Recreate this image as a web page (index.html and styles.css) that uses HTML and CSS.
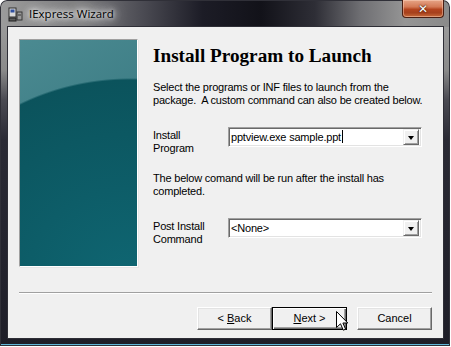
FILE: index.html
```html
<!DOCTYPE html>
<html>
<head>
<meta charset="utf-8">
<link rel="stylesheet" href="styles.css">
</head>
<body>
<div class="window">
  <div class="titlebar">
    <svg class="app-icon" width="15" height="15" viewBox="0 0 15 15">
      <rect x="1" y="1" width="7" height="9" fill="#d8d8d8" stroke="#303030"/>
      <rect x="2.5" y="2.5" width="4" height="3" fill="#3050a0"/>
      <rect x="9" y="5" width="5" height="8" fill="#9a9a9a" stroke="#303030"/>
      <rect x="1" y="11" width="7" height="3" fill="#5a5a5a" stroke="#202020"/>
      <line x1="10" y1="8" x2="13" y2="8" stroke="#303030"/>
    </svg>
    <span class="title">IExpress Wizard</span>
    <div class="close"><span class="close-x">✕</span></div>
  </div>
  <div class="client">
    <div class="main">
      <div class="banner"></div>
      <div class="content">
        <h1 class="heading">Install Program to Launch</h1>
        <p class="text">Select the programs or INF files to launch from the<br>package.&nbsp; A custom command can also be created below.</p>
        <div class="field field-first">
          <div class="label">Install<br>Program</div>
          <div class="combo">
            <span class="combo-value">pptview.exe sample.ppt<span class="caret"></span></span>
            <span class="combo-btn"><span class="arrow"></span></span>
          </div>
        </div>
        <p class="text text-second">The below comand will be run after the install has<br>completed.</p>
        <div class="field field-second">
          <div class="label">Post Install<br>Command</div>
          <div class="combo">
            <span class="combo-value">&lt;None&gt;</span>
            <span class="combo-btn"><span class="arrow"></span></span>
          </div>
        </div>
      </div>
    </div>
    <div class="separator"></div>
    <div class="buttons">
      <div class="btn"><span>&lt;&nbsp;<u>B</u>ack</span></div>
      <div class="btn btn-default"><span><u>N</u>ext&nbsp;&gt;</span></div>
      <div class="btn btn-cancel"><span>Cancel</span></div>
    </div>
  </div>
  <svg class="cursor" width="13" height="21" viewBox="0 0 13 21">
    <path d="M0.5 0.5 L0.5 16.5 L4.5 12.8 L7.3 19.2 L9.6 18.2 L6.9 12 L11.8 12 Z" fill="#fff" stroke="#000" stroke-width="1" stroke-linejoin="miter"/>
  </svg>
</div>
</body>
</html>
```

FILE: styles.css
```css
html, body {
  margin: 0;
  padding: 0;
  background: #ffffff;
}

.window {
  position: relative;
  width: 450px;
  height: 346px;
  box-sizing: border-box;
  padding: 0 7px 8px 8px;
  display: flex;
  flex-direction: column;
  border-radius: 7px 7px 0 0;
  background:
    linear-gradient(90deg, #9c9c9c 0%, #7c7c7e 18%, #4a4a52 32%, #1c1c26 45%, #121219 58%, #2e2e36 70%, #6e6e72 80%, #959595 90%, #8a8a8a 100%) top / 100% 27px no-repeat,
    linear-gradient(180deg, #9a9a9a 27px, #8a8a8a 70px, #4a4a52 100px, #2a2a34 140px, #1e1e28 100%);
  box-shadow: inset 0 0 0 1px #303038, inset 0 -2px 0 #5fb6d8;
}

.titlebar {
  height: 27px;
  display: flex;
  align-items: flex-start;
}

.app-icon {
  margin-top: 7px;
  flex: none;
}

.title {
  margin-left: 6px;
  margin-top: 6px;
  font-family: "Open Sans", "Noto Sans", sans-serif;
  font-size: 11.5px;
  line-height: 16px;
  color: #000;
  text-shadow: 0 0 4px #fff, 0 0 8px #fff, 0 0 12px rgba(255,255,255,0.9), 0 0 16px rgba(255,255,255,0.7);
}

.close {
  margin-left: auto;
  margin-right: -1px;
  width: 42px;
  height: 18px;
  box-sizing: border-box;
  border: 1px solid #4a1e12;
  border-top: none;
  border-radius: 0 0 4px 4px;
  background: linear-gradient(180deg, #e6a486 0%, #d47a56 40%, #b4441e 55%, #a6401c 75%, #c86a3a 100%);
  box-shadow: inset 0 0 0 1px rgba(255,220,200,0.45);
  display: flex;
  align-items: center;
  justify-content: center;
}

.close-x {
  font-family: "DejaVu Sans", sans-serif;
  font-weight: bold;
  font-size: 12px;
  line-height: 12px;
  color: #fff;
  text-shadow: 0 0 1px #3a1408, 0 0 2px #3a1408;
}

.client {
  flex: 1;
  background: #f0f0f0;
  box-shadow: 0 0 0 1px #2e2e36;
  padding: 12px 11px 8px 11px;
  display: flex;
  flex-direction: column;
  font-family: "Liberation Sans", Arial, sans-serif;
  font-size: 11px;
  color: #000;
}

.main {
  height: 253px;
  display: flex;
  gap: 15px;
}

.banner {
  width: 117px;
  height: 226px;
  flex: none;
  border: 1px solid;
  border-color: #a0a0a0 #ffffff #ffffff #a0a0a0;
  box-shadow: 1px 1px 0 #e6e6e6;
  background:
    radial-gradient(ellipse 227px 200px at 110px 238px, #0f6672 0%, #0d5d68 45%, #0b535c 99%, rgba(11,83,92,0) 100%),
    linear-gradient(150deg, #4b8a91 0%, #3f7f87 40%, #2f7079 65%, #1d6670 85%, #165f69 100%);
}

.content {
  flex: 1;
  padding-top: 6px;
  display: flex;
  flex-direction: column;
}

.heading {
  margin: 0;
  font-family: "Liberation Serif", "Times New Roman", serif;
  font-weight: bold;
  font-size: 19.2px;
  line-height: 22px;
  color: #000;
}

.text {
  margin: 14px 0 0 0;
  line-height: 13px;
  letter-spacing: -0.2px;
  white-space: nowrap;
}

.text-second {
  margin-top: 17px;
}

.field {
  display: flex;
  align-items: flex-start;
}

.field-first {
  margin-top: 20px;
}

.field-second {
  margin-top: 20px;
}

.label {
  width: 75px;
  flex: none;
  line-height: 13px;
  padding-top: 2px;
  letter-spacing: -0.2px;
}

.combo {
  width: 194px;
  height: 20px;
  box-sizing: border-box;
  border: 1px solid;
  border-color: #a0a0a0 #ffffff #ffffff #a0a0a0;
  box-shadow: inset 1px 1px 0 #696969, inset -1px -1px 0 #e3e3e3;
  background: #fff;
  display: flex;
  align-items: center;
  padding: 0 2px 0 2px;
}

.combo-value {
  flex: 1;
  line-height: 14px;
  letter-spacing: -0.2px;
  white-space: nowrap;
}

.caret {
  display: inline-block;
  width: 1px;
  height: 13px;
  background: #000;
  vertical-align: -2px;
  margin-left: 1px;
}

.combo-btn {
  width: 16px;
  height: 16px;
  box-sizing: border-box;
  border: 1px solid;
  border-color: #f0f0f0 #696969 #696969 #f0f0f0;
  box-shadow: inset 1px 1px 0 #ffffff, inset -1px -1px 0 #a0a0a0;
  background: #f0f0f0;
  display: flex;
  align-items: center;
  justify-content: center;
}

.arrow {
  width: 0;
  height: 0;
  border-left: 3.5px solid transparent;
  border-right: 3.5px solid transparent;
  border-top: 4px solid #000;
  margin-top: 1px;
}

.separator {
  height: 0;
  border-top: 1px solid #a0a0a0;
  border-bottom: 1px solid #ffffff;
}

.buttons {
  margin-top: 13px;
  display: flex;
  justify-content: flex-end;
}

.btn {
  width: 75px;
  height: 23px;
  box-sizing: border-box;
  border: 1px solid;
  border-color: #ffffff #696969 #696969 #ffffff;
  box-shadow: inset -1px -1px 0 #a0a0a0, inset 1px 1px 0 #e3e3e3;
  background: #f0f0f0;
  display: flex;
  align-items: center;
  justify-content: center;
  line-height: 13px;
}

.btn-default {
  border: 1px solid #000;
  box-shadow: inset 1px 1px 0 #ffffff, inset -1px -1px 0 #696969, inset -2px -2px 0 #a0a0a0;
}

.btn-cancel {
  margin-left: 10px;
}

.cursor {
  position: absolute;
  left: 336px;
  top: 311px;
}
```
